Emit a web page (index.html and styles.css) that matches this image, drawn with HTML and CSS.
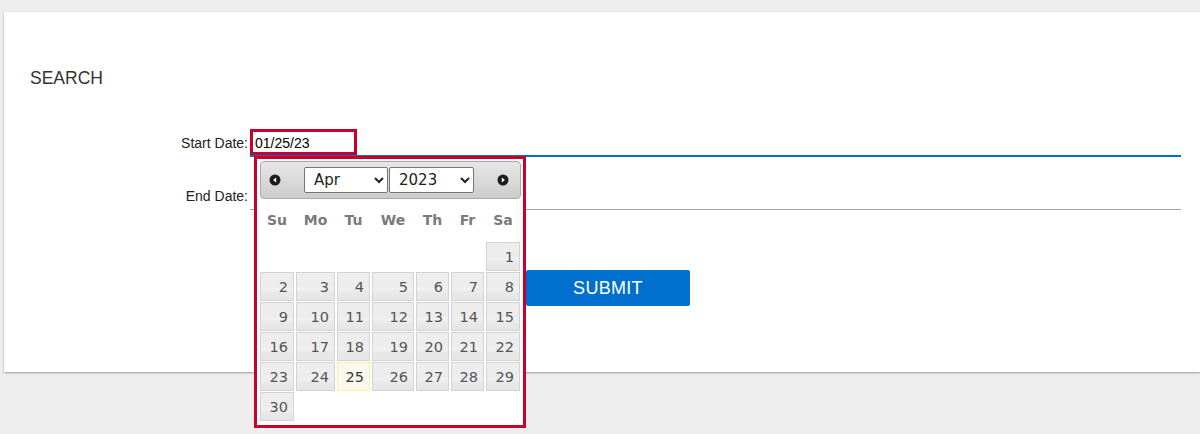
FILE: index.html
```html
<!DOCTYPE html>
<html lang="en">
<head>
<meta charset="utf-8">
<title>Search</title>
<link rel="stylesheet" href="styles.css">
</head>
<body>
<div class="page">
  <section class="card">
    <h2 class="title">SEARCH</h2>
    <form class="form">
      <label class="label" for="start">Start Date:</label>
      <div class="field">
        <input id="start" class="input input-active" type="text" value="01/25/23">
        <span class="mark mark-input"></span>
        <div class="datepicker">
          <div class="dp-header">
            <span class="dp-nav dp-prev">
              <svg width="12" height="12" viewBox="0 0 12 12"><circle cx="6" cy="6" r="5.5" fill="#1c1c1c"/><path d="M7.2 3.4 L4.1 6 L7.2 8.6 Z" fill="#fff"/></svg>
            </span>
            <div class="dp-title">
              <select class="dp-select dp-month">
                <option>Jan</option><option>Feb</option><option>Mar</option><option selected>Apr</option><option>May</option><option>Jun</option><option>Jul</option><option>Aug</option><option>Sep</option><option>Oct</option><option>Nov</option><option>Dec</option>
              </select>
              <select class="dp-select dp-year">
                <option>2022</option><option selected>2023</option><option>2024</option>
              </select>
            </div>
            <span class="dp-nav dp-next">
              <svg width="12" height="12" viewBox="0 0 12 12"><circle cx="6" cy="6" r="5.5" fill="#1c1c1c"/><path d="M4.8 3.4 L7.9 6 L4.8 8.6 Z" fill="#fff"/></svg>
            </span>
          </div>
          <div class="dp-grid">
            <span class="dp-th">Su</span><span class="dp-th">Mo</span><span class="dp-th">Tu</span><span class="dp-th">We</span><span class="dp-th">Th</span><span class="dp-th">Fr</span><span class="dp-th">Sa</span>
            <span class="dp-empty"></span><span class="dp-empty"></span><span class="dp-empty"></span><span class="dp-empty"></span><span class="dp-empty"></span><span class="dp-empty"></span><a class="dp-day">1</a>
            <a class="dp-day">2</a><a class="dp-day">3</a><a class="dp-day">4</a><a class="dp-day">5</a><a class="dp-day">6</a><a class="dp-day">7</a><a class="dp-day">8</a>
            <a class="dp-day">9</a><a class="dp-day">10</a><a class="dp-day">11</a><a class="dp-day">12</a><a class="dp-day">13</a><a class="dp-day">14</a><a class="dp-day">15</a>
            <a class="dp-day">16</a><a class="dp-day">17</a><a class="dp-day">18</a><a class="dp-day">19</a><a class="dp-day">20</a><a class="dp-day">21</a><a class="dp-day">22</a>
            <a class="dp-day">23</a><a class="dp-day">24</a><a class="dp-day dp-today">25</a><a class="dp-day">26</a><a class="dp-day">27</a><a class="dp-day">28</a><a class="dp-day">29</a>
            <a class="dp-day">30</a>
          </div>
        </div>
      </div>
      <label class="label" for="end">End Date:</label>
      <div class="field">
        <input id="end" class="input" type="text" value="">
      </div>
      <span class="label"></span>
      <div class="actions">
        <button type="button" class="submit">SUBMIT</button>
      </div>
    </form>
  </section>
</div>
</body>
</html>
```
FILE: styles.css
```css
* { box-sizing: border-box; }
html, body { margin: 0; padding: 0; }
body {
  background: #eeeeee;
  font-family: "Liberation Sans", Arial, sans-serif;
  overflow: hidden;
  height: 434px;
}
.page {
  padding: 12px 0 0 4px;
}
.card {
  background: #fff;
  box-shadow: 0 1px 2px rgba(0,0,0,0.35);
  height: 360px;
  padding: 56px 19px 0 26px;
}
.title {
  margin: 0;
  font-size: 17.5px;
  font-weight: normal;
  line-height: 21px;
  color: #333;
}
.form {
  margin-top: 40px;
  display: grid;
  grid-template-columns: 218px 931px;
  column-gap: 2px;
  row-gap: 25px;
  align-items: center;
}
.label {
  text-align: right;
  font-size: 14px;
  color: #222;
  padding-bottom: 1px;
}
.field {
  position: relative;
  height: 28px;
}
.input {
  display: block;
  width: 100%;
  height: 28px;
  border: none;
  border-bottom: 1px solid #a6a6a6;
  padding: 2px 5px 0;
  font-family: "Liberation Sans", Arial, sans-serif;
  font-size: 14px;
  color: #000;
  background: transparent;
  outline: none;
}
.input-active {
  border-bottom: 2px solid #0070c9;
}
.mark {
  position: absolute;
  border: 3px solid #c8002b;
}
.mark-input {
  left: 0;
  top: 0;
  width: 107px;
  height: 26px;
}
.actions {
  margin-top: 35px;
  padding-left: 276px;
}
.submit {
  width: 164px;
  height: 36px;
  border: none;
  border-radius: 2px;
  background: #006fcd;
  color: #fff;
  font-family: "Liberation Sans", Arial, sans-serif;
  font-size: 18px;
  letter-spacing: 0.3px;
  padding: 0;
}

/* datepicker */
.datepicker {
  position: absolute;
  left: 4px;
  top: 27px;
  width: 272px;
  height: 272px;
  border: 3px solid #c8002b;
  background: #fff;
  padding: 2px 2px 5px 3px;
  font-family: "DejaVu Sans", Verdana, sans-serif;
  z-index: 5;
}
.dp-header {
  height: 38px;
  border: 1px solid #aaaaaa;
  border-radius: 4px;
  background: linear-gradient(#e6e6e6 0%, #dadada 50%, #cccccc 100%);
  display: flex;
  align-items: center;
  justify-content: space-between;
  padding: 0 11px 0 8px;
}
.dp-nav {
  display: flex;
  width: 12px;
  height: 12px;
}
.dp-title {
  display: flex;
}
.dp-select {
  height: 26px;
  font-family: "DejaVu Sans", Verdana, sans-serif;
  font-size: 15px;
  color: #222;
  background: #fff;
  border: 1px solid #767676;
  border-radius: 2px;
  padding: 0 2px 0 5px;
  margin: 0;
}
.dp-month { width: 84px; }
.dp-year { width: 85px; margin-left: 1px; }
.dp-grid {
  display: grid;
  grid-template-columns: 34px 39px 33px 42px 33px 33px 34px;
  grid-template-rows: 42px;
  grid-auto-rows: 29px;
  column-gap: 2px;
  row-gap: 1px;
  width: 260px;
}
.dp-th {
  display: flex;
  align-items: center;
  justify-content: center;
  font-weight: bold;
  font-size: 14px;
  color: #7a7a7a;
  padding-bottom: 1px;
}
.dp-day {
  display: flex;
  align-items: center;
  justify-content: flex-end;
  padding: 0 5px 0 0;
  border: 1px solid #d3d3d3;
  background: linear-gradient(#eeeeee 0%, #ececec 50%, #f1f1f1 58%, #e8e8e8 75%, #e6e6e6 100%);
  color: #555;
  font-size: 14.5px;
}
.dp-today {
  border-color: #fcefa1;
  background: #fbf9ee;
  color: #363636;
}
```
